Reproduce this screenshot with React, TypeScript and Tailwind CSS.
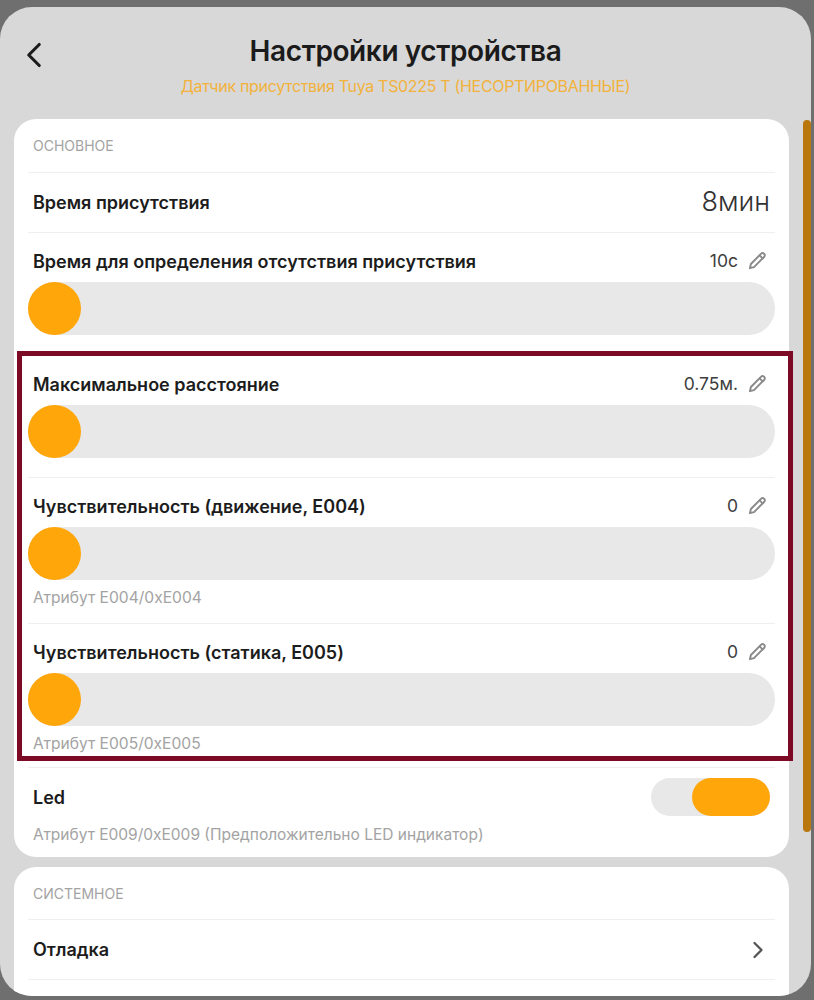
import { ChevronLeft, ChevronRight } from "lucide-react"

function PencilIcon() {
  return (
    <svg width="20" height="20" viewBox="0 0 20 20" fill="none" stroke="#8a8a8a" strokeWidth="1.9" strokeLinejoin="round" strokeLinecap="round">
      <path d="M14.2 2.6a1.9 1.9 0 0 1 2.7 0l.4.4a1.9 1.9 0 0 1 0 2.7L7 16.2l-4.1 1 1-4.2z" />
      <path d="M12.6 4.3l3 3" />
    </svg>
  )
}

function SliderRow({ label, value, attr, pb }: { label: string; value: string; attr?: string; pb: string }) {
  return (
    <div className={`border-b border-[#efefef] pt-4 ${pb}`}>
      <div className="flex h-6 items-center justify-between pl-[5px] pr-2 mb-[9px]">
        <span className="text-[18px] font-semibold text-[#1c1c1c]">{label}</span>
        <div className="flex items-center gap-[9px]">
          <span className="text-[17.5px] text-[#3d3d3d]">{value}</span>
          <PencilIcon />
        </div>
      </div>
      <div className="h-[53px] rounded-full bg-[#e8e8e8]">
        <div className="h-[53px] w-[53px] rounded-full bg-[#ffa60a]" />
      </div>
      {attr && <p className="mt-2 pl-[5px] text-[15.6px] leading-5 text-[#a3a3a3]">{attr}</p>}
    </div>
  )
}

export default function App() {
  return (
    <div className="h-[1000px] w-[814px] overflow-hidden bg-[#6f6f6f] pt-[7px] font-['Inter',sans-serif]">
      <div className="relative h-[989px] w-[811px] overflow-hidden rounded-[32px] bg-[#d8d8d8] px-[14px]">
        <div className="relative h-[112px] pt-[26px] text-center">
          <ChevronLeft className="absolute -left-[1px] top-[27px]" size={42} strokeWidth={1.8} color="#1c1c1c" />
          <h1 className="text-[28px] leading-9 font-semibold tracking-[-0.4px] text-[#1b1b1b]">Настройки устройства</h1>
          <p className="mt-[7px] text-[16px] leading-5 tracking-[-0.32px] text-[#f2b23c]">
            Датчик присутствия Tuya TS0225 T (НЕСОРТИРОВАННЫЕ)
          </p>
        </div>

        <div className="w-[775px] rounded-[22px] bg-white px-[14px]">
          <div className="flex h-[54px] items-center border-b border-[#efefef] pl-[5px] text-[14px] text-[#a3a3a3]">ОСНОВНОЕ</div>
          <div className="flex h-[60px] items-center justify-between border-b border-[#efefef] pl-[5px] pr-[5px]">
            <span className="text-[18px] font-semibold text-[#1c1c1c]">Время присутствия</span>
            <span className="text-[27px] font-light text-[#333333]">8мин</span>
          </div>
          <SliderRow label="Время для определения отсутствия присутствия" value="10с" pb="pb-[20px]" />
          <SliderRow label="Максимальное расстояние" value="0.75м." pb="pb-[19px]" />
          <SliderRow label="Чувствительность (движение, E004)" value="0" attr="Атрибут E004/0xE004" pb="pb-[15px]" />
          <SliderRow label="Чувствительность (статика, E005)" value="0" attr="Атрибут E005/0xE005" pb="pb-[13px]" />
          <div className="h-[89px] pl-[5px] pr-[5px] pt-[10px]">
            <div className="flex h-[38px] items-center justify-between">
              <span className="text-[18px] font-semibold text-[#1c1c1c]">Led</span>
              <div className="flex h-[38px] w-[119px] justify-end rounded-full bg-[#e8e8e8]">
                <div className="h-[38px] w-[78px] rounded-full bg-[#ffa60a]" />
              </div>
            </div>
            <p className="mt-[9px] text-[15.5px] leading-5 text-[#a3a3a3]">Атрибут E009/0xE009 (Предположительно LED индикатор)</p>
          </div>
        </div>

        <div className="mt-[10px] w-[775px] rounded-[22px] bg-white px-[14px] pb-10">
          <div className="flex h-[53px] items-center border-b border-[#efefef] pl-[5px] text-[14px] text-[#a3a3a3]">СИСТЕМНОЕ</div>
          <div className="flex h-[60px] items-center justify-between border-b border-[#efefef] pl-[5px] pr-[3px]">
            <span className="text-[18px] font-semibold text-[#1c1c1c]">Отладка</span>
            <ChevronRight size={28} strokeWidth={2} color="#555555" />
          </div>
        </div>

        {/* highlight frame drawn over the screenshot */}
        <div className="absolute left-[17px] top-[344px] h-[410px] w-[776px] border-[5px] border-[#7c0a24]" />
        {/* scrollbar */}
        <div className="absolute left-[803px] top-[113px] h-[712px] w-[8px] rounded-full bg-[#b9770e]" />
      </div>
    </div>
  )
}
